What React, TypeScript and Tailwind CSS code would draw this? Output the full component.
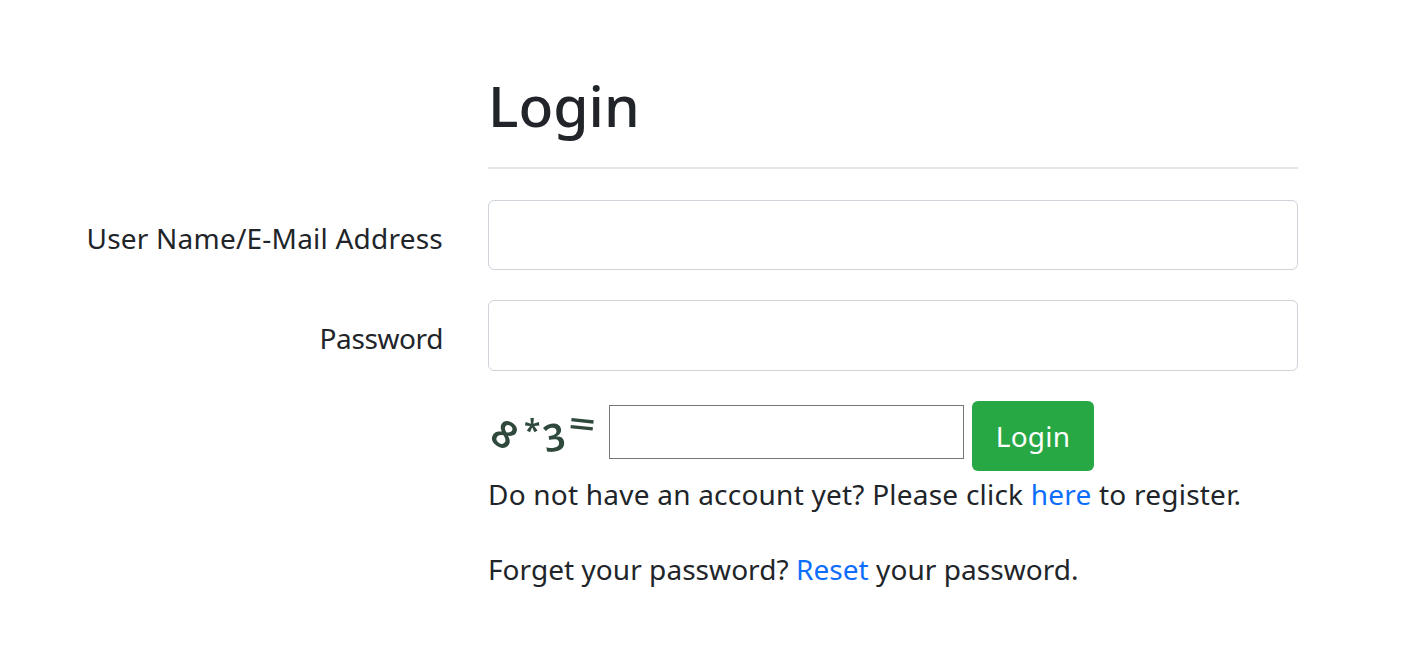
function CaptchaImage() {
  return (
    <div
      aria-label="8*3="
      className="flex h-[70px] w-[108px] shrink-0 items-center font-['Noto_Sans',sans-serif] text-[#2f4a3c] blur-[0.6px]"
    >
      <span className="ml-[7px] inline-block h-[20px] w-[18px] translate-y-[-4px] rotate-[35deg] text-center text-[38px] leading-[20px] font-semibold">8</span>
      <span className="ml-[11px] inline-block w-[16px] translate-y-[-6px] text-[30px] leading-none font-semibold">*</span>
      <span className="ml-[3px] inline-block w-[23px] -rotate-[10deg] text-[38px] leading-none font-semibold">3</span>
      <span className="ml-[6px] inline-block w-[22px] translate-y-[-12px] rotate-[6deg] scale-x-[1.3] text-[36px] leading-none font-semibold">=</span>
    </div>
  );
}

export default function App() {
  return (
    <div className="h-[650px] overflow-hidden bg-white font-['Noto_Sans',sans-serif] text-[28px] tracking-[0.22px] text-[#212529]">
      <div className="grid grid-cols-[443px_810px] gap-x-[45px] pt-[63px]">
        <div />
        <div>
          <h1 className="h-[106px] border-b-2 border-[#e5e5e9] text-[57px] leading-[84px] font-[550] tracking-[0px]">Login</h1>
        </div>

        <label className="mt-[31px] pt-[19px] text-right leading-[38px]">User Name/E-Mail Address</label>
        <input className="mt-[31px] h-[70px] rounded-[6px] border border-[#ced4da] bg-white" />

        <label className="mt-[30px] pt-[19px] text-right leading-[38px] tracking-[-0.4px]">Password</label>
        <input className="mt-[30px] h-[71px] rounded-[6px] border border-[#ced4da] bg-white" />

        <div />
        <div className="mt-[30px]">
          <div className="flex items-start">
            <CaptchaImage />
            <input className="mt-[4px] ml-[13px] h-[54px] w-[355px] border border-[#767676] bg-white" />
            <button className="ml-[8px] h-[70px] w-[122px] rounded-[6px] bg-[#28a745] text-white">Login</button>
          </div>
          <p className="mt-[2px] leading-[42px]">
            Do not have an account yet? Please click <a className="text-[#0d6efd]">here</a> to register.
          </p>
          <p className="mt-[33px] leading-[42px] tracking-[0.05px]">
            Forget your password? <a className="text-[#0d6efd]">Reset</a> your password.
          </p>
        </div>
      </div>
    </div>
  );
}
